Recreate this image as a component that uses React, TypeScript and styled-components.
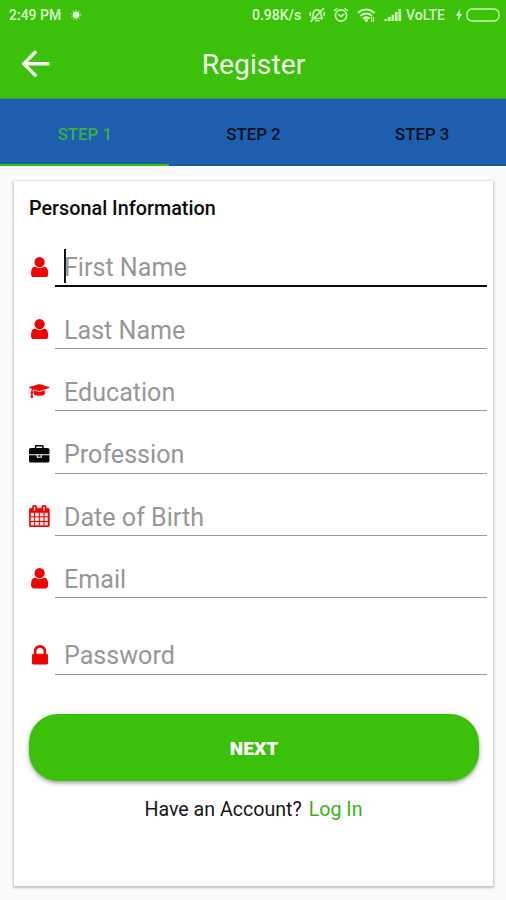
import React from 'react';
import styled, { createGlobalStyle } from 'styled-components';

const GREEN = '#3bc10a';
const BLUE = '#1d5fae';
const RED = '#f00303';

const GlobalStyle = createGlobalStyle`
  * { box-sizing: border-box; }
  body { margin: 0; background: #fafafa; font-family: Roboto, 'Liberation Sans', sans-serif; }
`;

const Screen = styled.main`
  width: 506px;
  height: 900px;
  display: flex;
  flex-direction: column;
  background: #fafafa;
  overflow: hidden;
`;

const StatusBar = styled.div`
  height: 30px;
  flex: none;
  display: flex;
  align-items: center;
  justify-content: space-between;
  padding: 0 6px 0 9px;
  background: ${GREEN};
  color: #d9f8c9;
  font-weight: 500;
  white-space: nowrap;
`;

const StatusGroup = styled.div`
  display: flex;
  align-items: center;
`;

const StatusText = styled.span<{ $width: number }>`
  width: ${(p) => p.$width}px;
  font-size: 14px;
  line-height: 30px;
`;

const StatusIcon = styled.svg<{ $gap?: number }>`
  display: block;
  flex: none;
  margin-left: ${(p) => p.$gap ?? 0}px;
  fill: none;
  stroke: #c9f5b3;
  stroke-width: 1.6;
  stroke-linecap: round;
  stroke-linejoin: round;
`;

const AppBar = styled.header`
  height: 69px;
  flex: none;
  display: grid;
  grid-template-columns: 60px 1fr 60px;
  align-items: center;
  background: ${GREEN};
  border-bottom: 1px solid #2c9b45;
`;

const BackButton = styled.button`
  border: 0;
  padding: 0 0 0 21px;
  background: none;
  display: flex;
`;

const Title = styled.h1`
  margin: 0;
  padding: 2px 0 0 1px;
  text-align: center;
  color: #f4ffef;
  font-size: 28.3px;
  font-weight: 400;
  line-height: 66px;
`;

const Tabs = styled.nav`
  height: 67px;
  flex: none;
  display: grid;
  grid-template-columns: repeat(3, 1fr);
  background: ${BLUE};
`;

const Tab = styled.button<{ $active?: boolean }>`
  border: 0;
  border-bottom: 2px solid ${(p) => (p.$active ? GREEN : '#1b57a3')};
  padding: 4px 0 0 1px;
  background: none;
  color: ${(p) => (p.$active ? '#3cb043' : '#06101f')};
  font: 500 16.8px Roboto, sans-serif;
`;

const Card = styled.section`
  width: 479px;
  height: 705px;
  margin: 15px 0 0 14px;
  display: flex;
  flex-direction: column;
  background: #fff;
  box-shadow: 0 1px 2px 1px rgba(0, 0, 0, 0.22);
`;

const Heading = styled.h2`
  margin: 0;
  height: 43.4px;
  padding: 17px 0 0 15px;
  font-size: 19.8px;
  font-weight: 500;
  line-height: 22px;
  color: #0c0c0c;
`;

const FieldRow = styled.div<{ $height?: number }>`
  height: ${(p) => p.$height ?? 62.3}px;
  display: grid;
  grid-template-columns: 41px 432px;
  align-items: end;
`;

const IconSlot = styled.div`
  height: 40px;
  padding: 0 0 0 10px;
  display: flex;
  align-items: center;
  justify-content: center;
`;

const Input = styled.div<{ $focused?: boolean }>`
  height: 40px;
  padding: 3px 0 0 9px;
  display: flex;
  align-items: center;
  border-bottom: ${(p) => (p.$focused ? '2px solid #0a0a0a' : '1.5px solid #999')};
  color: #979797;
  font-size: 25.1px;
  white-space: nowrap;
`;

const Caret = styled.i`
  width: 2px;
  height: 34px;
  margin: -2px -2px 0 0;
  background: #111;
`;

const NextButton = styled.button`
  width: 450px;
  height: 67px;
  flex: none;
  margin: 39.5px 0 0 15px;
  border: 0;
  border-radius: 29px;
  padding-top: 3px;
  background: ${GREEN};
  box-shadow: 0 2px 4px rgba(0, 0, 0, 0.4);
  color: #fff;
  font: 900 19.2px Roboto, sans-serif;
`;

const LoginPrompt = styled.p`
  margin: 17px 0 0;
  display: flex;
  justify-content: center;
  gap: 7px;
  font-size: 19.6px;
  line-height: 24px;
  color: #161616;
`;

const LoginLink = styled.span`
  color: #39b217;
`;

type Glyph = { box: string; width: number; height: number; weight?: number; d: string };

const USER: Glyph = {
  box: '256 128 1280 1536',
  width: 17.2,
  height: 20.6,
  d: 'M1536 1399q0 109-62.5 187t-150.5 78h-854q-88 0-150.5-78t-62.5-187q0-85 8.5-160.5t31.5-152 58.5-131 94-89 134.5-34.5q131 128 313 128t313-128q76 0 134.5 34.5t94 89 58.5 131 31.5 152 8.5 160.5zm-256-887q0 159-112.5 271.5t-271.5 112.5-271.5-112.5-112.5-271.5 112.5-271.5 271.5-112.5 271.5 112.5 112.5 271.5z',
};
const CAP: Glyph = {
  box: '0 128 2304 1536',
  width: 20.5,
  height: 14,
  weight: 40,
  d: 'M1774 836l18 316q4 69-82 128t-235 93.5-323 34.5-323-34.5-235-93.5-82-128l18-316 574 181q22 7 48 7t48-7zm530-324q0 23-22 31l-1120 352q-4 1-10 1t-10-1l-652-206q-43 34-71 111.5t-34 178.5q63 36 63 109 0 69-58 107l58 433q2 14-8 25-9 11-24 11h-192q-15 0-24-11-10-11-8-25l58-433q-58-38-58-107 0-73 65-111 11-207 98-330l-333-104q-22-8-22-31t22-31l1120-352q4-1 10-1t10 1l1120 352q22 8 22 31z',
};
const BRIEFCASE: Glyph = {
  box: '0 0 1792 1536',
  width: 20.5,
  height: 17.6,
  d: 'M640 256h512v-128h-512v128zm1152 640v480q0 66-47 113t-113 47h-1472q-66 0-113-47t-47-113v-480h672v160q0 26 19 45t45 19h320q26 0 45-19t19-45v-160h672zm-768 0v128h-256v-128h256zm768-480v384h-1792v-384q0-66 47-113t113-47h352v-160q0-40 28-68t68-28h576q40 0 68 28t28 68v160h352q66 0 113 47t47 113z',
};
const CALENDAR: Glyph = {
  box: '64 0 1664 1792',
  width: 20.6,
  height: 22,
  weight: 30,
  d: 'M192 1664h288v-288h-288v288zm352 0h320v-288h-320v288zm-352-352h288v-320h-288v320zm352 0h320v-320h-320v320zm-352-384h288v-288h-288v288zm736 736h320v-288h-320v288zm-384-736h320v-288h-320v288zm768 736h288v-288h-288v288zm-384-352h320v-320h-320v320zm-352-864v-288q0-13-9.5-22.5t-22.5-9.5h-64q-13 0-22.5 9.5t-9.5 22.5v288q0 13 9.5 22.5t22.5 9.5h64q13 0 22.5-9.5t9.5-22.5zm736 864h288v-320h-288v320zm-384-384h320v-288h-320v288zm384 0h288v-288h-288v288zm32-480v-288q0-13-9.5-22.5t-22.5-9.5h-64q-13 0-22.5 9.5t-9.5 22.5v288q0 13 9.5 22.5t22.5 9.5h64q13 0 22.5-9.5t9.5-22.5zm384-64v1280q0 52-38 90t-90 38h-1408q-52 0-90-38t-38-90v-1280q0-52 38-90t90-38h128v-96q0-66 47-113t113-47h64q66 0 113 47t47 113v96h384v-96q0-66 47-113t113-47h64q66 0 113 47t47 113v96h128q52 0 90 38t38 90z',
};
const LOCK: Glyph = {
  box: '320 128 1152 1408',
  width: 16,
  height: 19.5,
  d: 'M640 768h512v-192q0-106-75-181t-181-75-181 75-75 181v192zm832 96v576q0 40-28 68t-68 28h-960q-40 0-68-28t-28-68v-576q0-40 28-68t68-28h32v-192q0-184 132-316t316-132 316 132 132 316v192h32q40 0 68 28t28 68z',
};

type Field = { label: string; glyph: Glyph; color?: string; focused?: boolean; height?: number };

const FIELDS: Field[] = [
  { label: 'First Name', glyph: USER, focused: true, height: 62.5 },
  { label: 'Last Name', glyph: USER },
  { label: 'Education', glyph: CAP },
  { label: 'Profession', glyph: BRIEFCASE, color: '#050505' },
  { label: 'Date of Birth', glyph: CALENDAR },
  { label: 'Email', glyph: USER },
  { label: 'Password', glyph: LOCK, height: 76.6 },
];

const GlyphIcon = ({ glyph, color = RED }: { glyph: Glyph; color?: string }) => (
  <svg
    width={glyph.width}
    height={glyph.height}
    viewBox={glyph.box}
    fill={color}
    stroke={color}
    strokeWidth={glyph.weight ?? 0}
  >
    <path d={glyph.d} />
  </svg>
);

export default function App() {
  return (
    <Screen>
      <GlobalStyle />
      <StatusBar>
        <StatusGroup>
          <StatusText $width={61}>2:49 PM</StatusText>
          <StatusIcon width="12" height="12" viewBox="0 0 12 12">
            <circle cx="6" cy="6" r="3.4" fill="#e6fbdc" stroke="none" />
            <circle cx="6" cy="6" r="4.7" strokeWidth="1.4" strokeDasharray="1.2 1.76" strokeLinecap="butt" opacity="0.6" />
          </StatusIcon>
        </StatusGroup>
        <StatusGroup>
          <StatusText $width={57}>0.98K/s</StatusText>
          <StatusIcon width="17" height="16" viewBox="0 0 17 16">
            <path d="M3 11.5h10.5c-1.200-1.200-1.500-2.400-1.500-5a4 4 0 0 0-7.600-1.300C4 7 4.300 10 3 11.500M6.500 13.800h3.500M14.500 1.500 2 14.500M15.200 5.500v3M1.300 5.500v3" />
          </StatusIcon>
          <StatusIcon width="16" height="16" viewBox="0 0 16 16" $gap={7}>
            <circle cx="8" cy="8.500" r="5.600" />
            <path d="M1.500 3.500 4 1.500M14.500 3.500 12 1.500M5.500 7.500 8 9.500l2.800-2.200" />
          </StatusIcon>
          <StatusIcon width="19" height="16" viewBox="0 0 19 16" $gap={8}>
            <path d="M1.500 5.500c4.500-4 11-4 15.500 0M4 8.500c3-2.700 7.500-2.700 10.500 0M6.500 11.200c1.700-1.500 3.800-1.500 5.500 0" strokeWidth="2" />
            <circle cx="9.300" cy="13" r="1.100" fill="#c9f5b3" />
            <path d="M14.500 10.500v4M16.500 10.500v4" strokeWidth="1.200" />
          </StatusIcon>
          <StatusIcon width="18" height="14" viewBox="0 0 18 14" $gap={8}>
            <path d="M1.800 11v2M5.300 9v4M8.800 6.500v6.500M12.300 4v9M15.800 1v12" strokeWidth="2.700" strokeLinecap="butt" />
          </StatusIcon>
          <StatusIcon as="span" $gap={4} />
          <StatusText $width={49}>VoLTE</StatusText>
          <StatusIcon width="8" height="14" viewBox="0 0 8 14">
            <path d="M5.200 1 .8 7.800h2.600L2.600 13 7.300 6H4.500z" fill="#d9f8c9" stroke="none" />
          </StatusIcon>
          <StatusIcon width="34" height="14" viewBox="0 0 34 14" $gap={3}>
            <rect x="1" y="1" width="32" height="12" rx="5" strokeWidth="1.300" />
          </StatusIcon>
        </StatusGroup>
      </StatusBar>
      <AppBar>
        <BackButton aria-label="Back">
          <svg width="30" height="30" viewBox="0 0 30 30" fill="none" stroke="#f8fff4" strokeWidth="3.400">
            <path d="M15.200 2.300 2.800 14.700 15.200 27.100M2.800 14.700H28.500" />
          </svg>
        </BackButton>
        <Title>Register</Title>
      </AppBar>
      <Tabs>
        <Tab $active>STEP 1</Tab>
        <Tab>STEP 2</Tab>
        <Tab>STEP 3</Tab>
      </Tabs>
      <Card>
        <Heading>Personal Information</Heading>
        {FIELDS.map((f) => (
          <FieldRow key={f.label} $height={f.height}>
            <IconSlot>
              <GlyphIcon glyph={f.glyph} color={f.color} />
            </IconSlot>
            <Input $focused={f.focused}>
              {f.focused && <Caret />}
              {f.label}
            </Input>
          </FieldRow>
        ))}
        <NextButton>NEXT</NextButton>
        <LoginPrompt>
          Have an Account? <LoginLink>Log In</LoginLink>
        </LoginPrompt>
      </Card>
    </Screen>
  );
}
